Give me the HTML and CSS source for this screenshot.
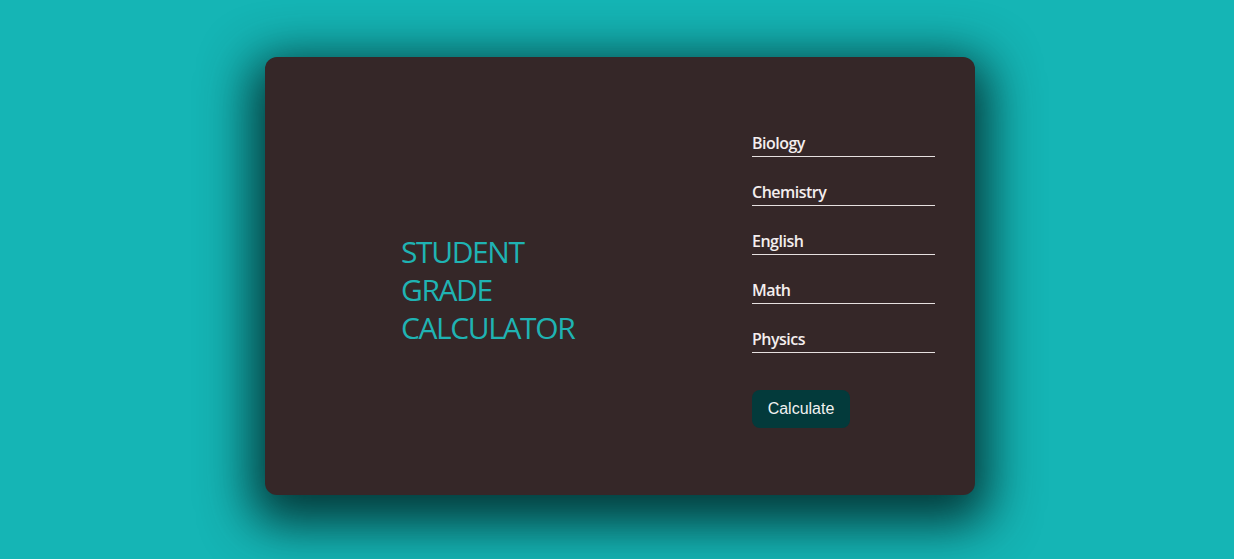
FILE: index.html
```html
<!DOCTYPE html>
<html>
<head>
<meta charset="utf-8">
<link rel="stylesheet" href="styles.css">
</head>
<body>
<main class="card">
  <h1 class="title">STUDENT<br>GRADE<br>CALCULATOR</h1>
  <form class="form">
    <div class="field">Biology</div>
    <div class="field">Chemistry</div>
    <div class="field">English</div>
    <div class="field">Math</div>
    <div class="field">Physics</div>
    <button type="button" class="btn">Calculate</button>
  </form>
</main>
</body>
</html>
```
FILE: styles.css
```css
html, body { margin: 0; padding: 0; }
body {
  background: #15b5b5;
  width: 1234px;
  height: 559px;
  overflow: hidden;
  display: flex;
  justify-content: center;
  padding-top: 57px;
  box-sizing: border-box;
  font-family: "Open Sans", sans-serif;
}
.card {
  width: 710px;
  height: 438px;
  margin-left: 6px;
  background: #352728;
  border-radius: 12px;
  box-shadow: 0 15px 50px 14px rgba(0, 35, 35, 0.85);
  display: flex;
  align-items: flex-start;
  box-sizing: border-box;
  padding-left: 136px;
}
.title {
  margin: 176px 0 0 0;
  font-weight: 400;
  font-size: 30px;
  line-height: 38px;
  color: #1fb3b3;
  letter-spacing: -1.4px;
  width: 351px;
}
.form {
  margin-top: 76px;
  display: flex;
  flex-direction: column;
  width: 183px;
}
.field {
  color: #f4eeee;
  font-weight: 600;
  font-size: 16px;
  letter-spacing: -0.5px;
  line-height: 20px;
  height: 23px;
  border-bottom: 1px solid #e6e0e0;
  margin-bottom: 25px;
}
.btn {
  margin-top: 12px;
  align-self: flex-start;
  width: 98px;
  height: 38px;
  background: #033a3b;
  border: none;
  border-radius: 8px;
  color: #f1f1f1;
  font-family: "Liberation Sans", Arial, sans-serif;
  font-size: 16px;
}
```
